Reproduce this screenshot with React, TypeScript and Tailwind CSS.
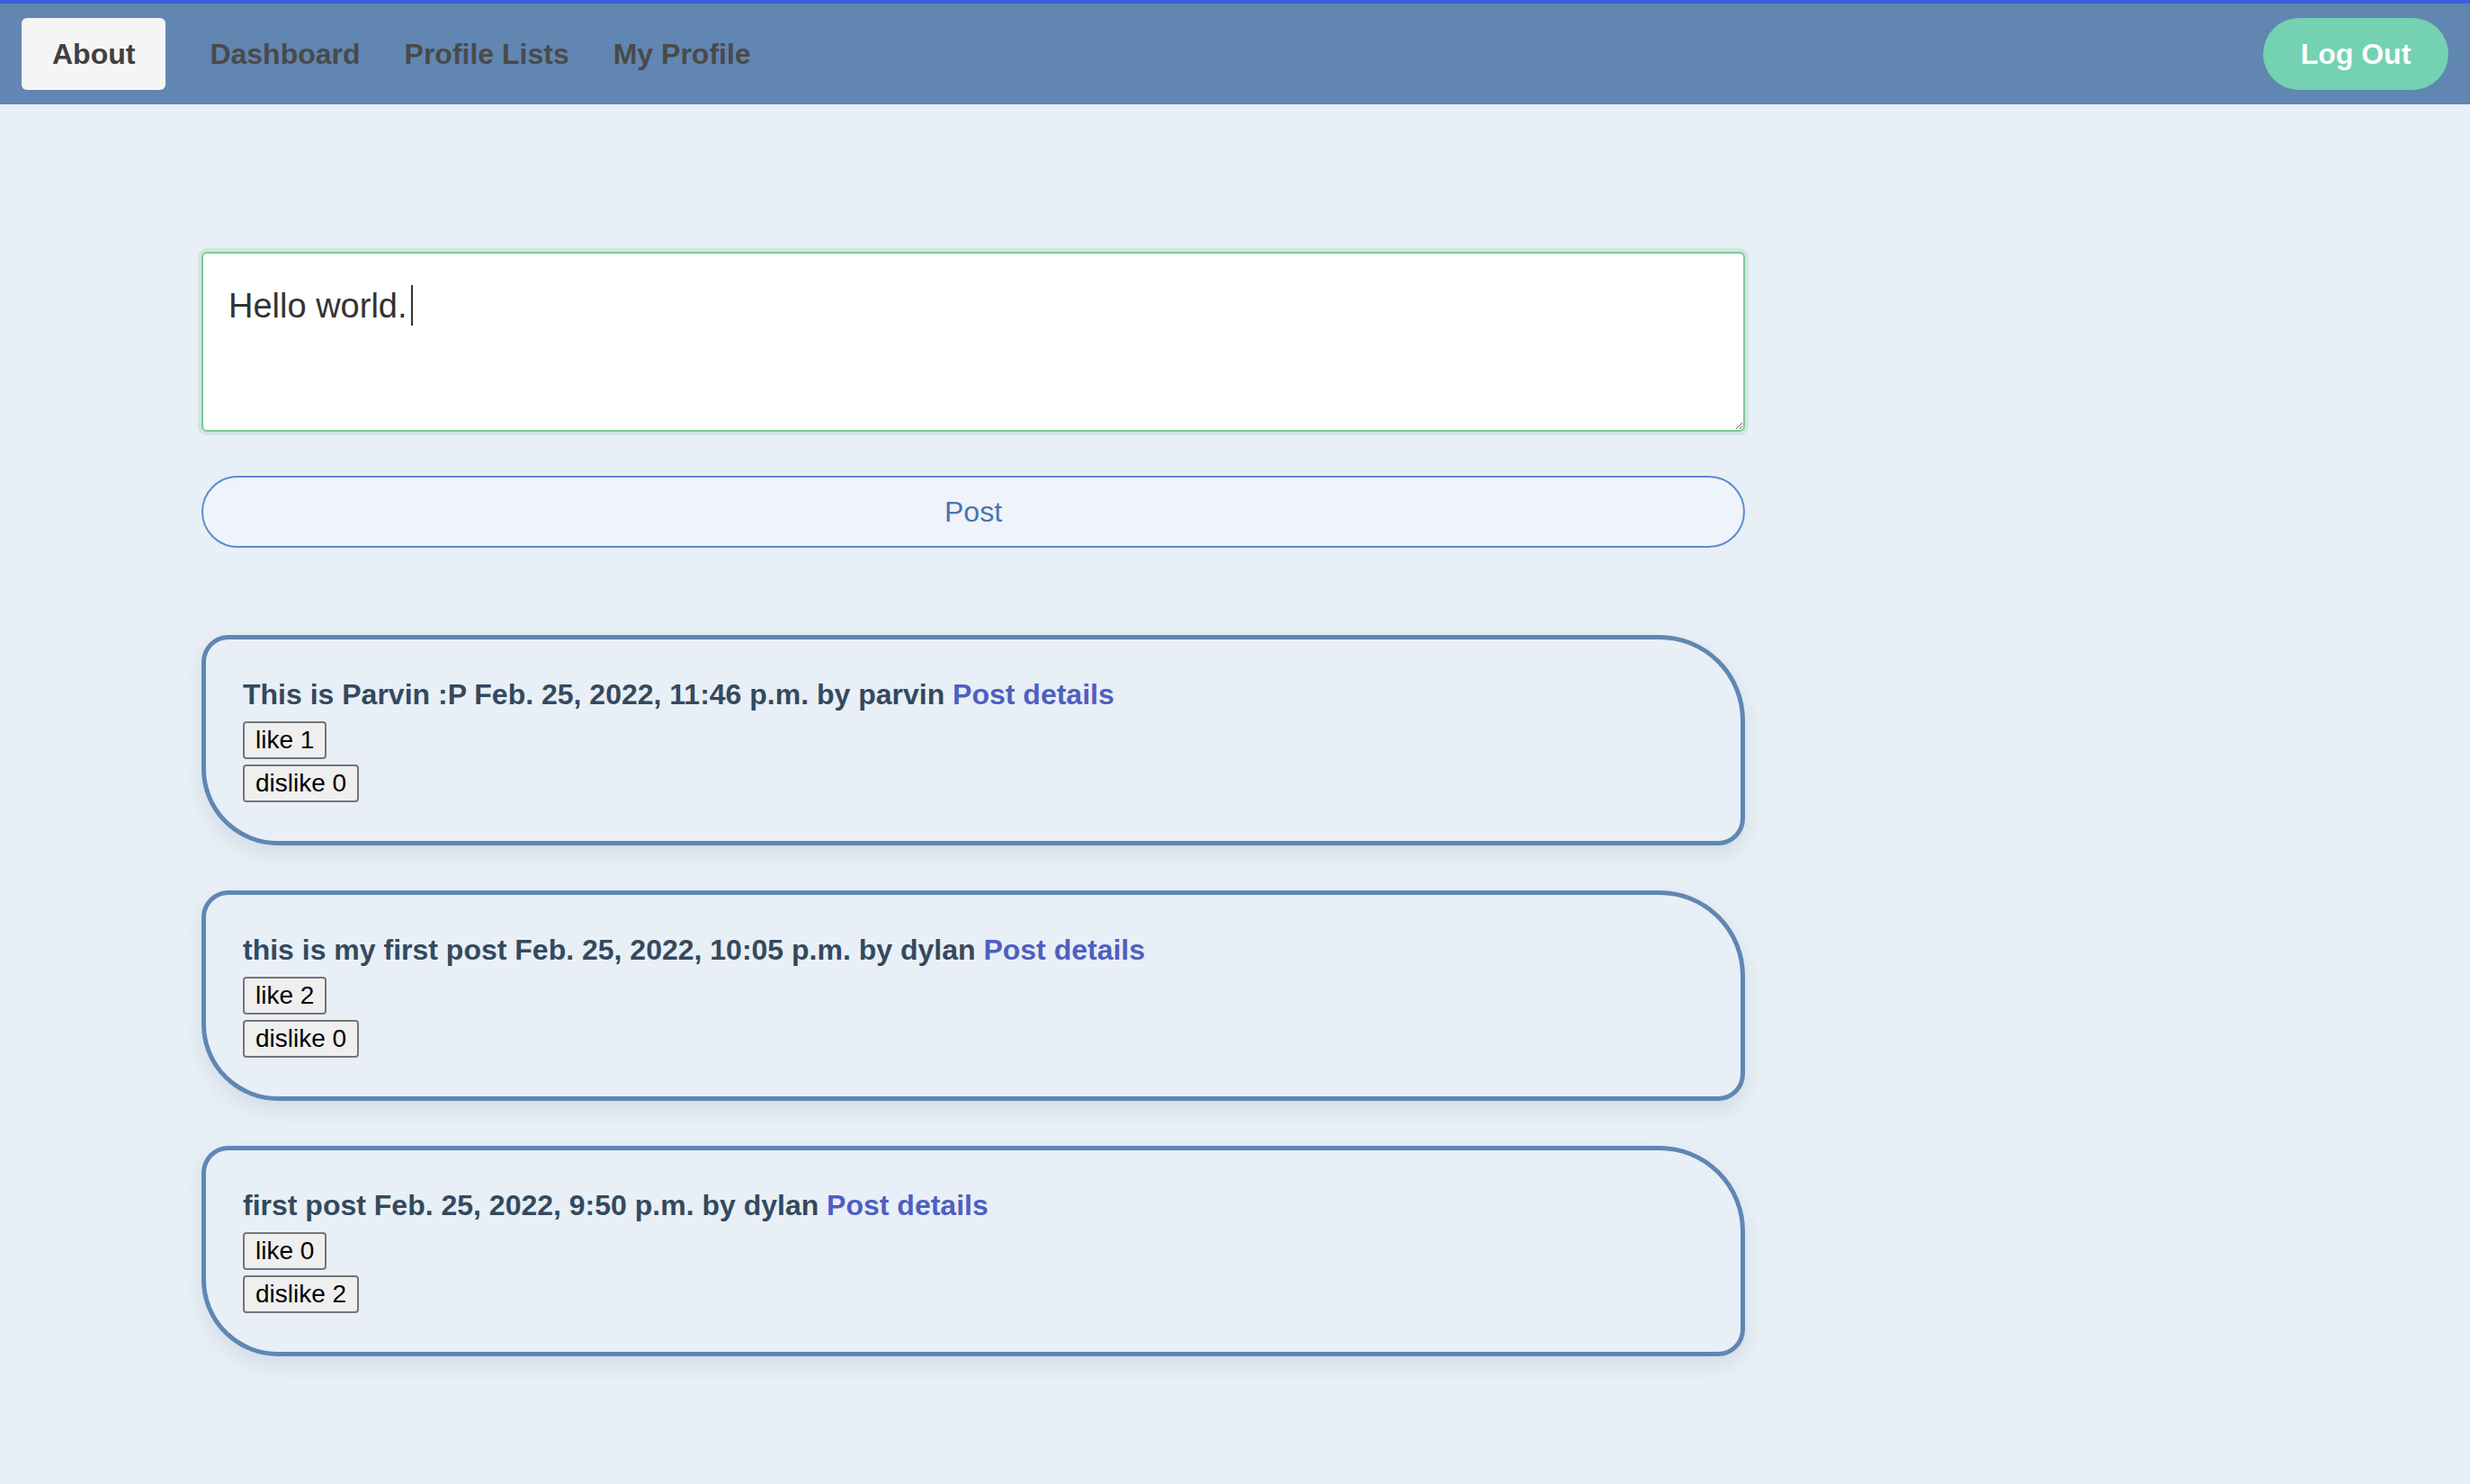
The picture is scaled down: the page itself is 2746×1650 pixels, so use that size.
import React from 'react';

type Post = { body: string; when: string; author: string; likes: number; dislikes: number };

const POSTS: Post[] = [
  { body: 'This is Parvin :P', when: 'Feb. 25, 2022, 11:46 p.m.', author: 'parvin', likes: 1, dislikes: 0 },
  { body: 'this is my first post', when: 'Feb. 25, 2022, 10:05 p.m.', author: 'dylan', likes: 2, dislikes: 0 },
  { body: 'first post', when: 'Feb. 25, 2022, 9:50 p.m.', author: 'dylan', likes: 0, dislikes: 2 },
];

const NavBar: React.FC = () => (
  <nav className="h-[116px] border-t-4 border-[#3b5fd8] bg-[#6186b2] px-[24px] flex items-center justify-between">
    <div className="flex items-center gap-[49px] text-[32px] font-bold text-[#4a4a4a]">
      <a className="h-[80px] px-[34px] rounded-[6px] bg-[#f5f5f5] flex items-center text-[#404040]">About</a>
      <a>Dashboard</a>
      <a>Profile Lists</a>
      <a>My Profile</a>
    </div>
    <button className="h-[80px] w-[206px] rounded-full bg-[#74d1b2] text-[32px] font-bold text-white">
      Log Out
    </button>
  </nav>
);

const PostCard: React.FC<{ post: Post }> = ({ post }) => (
  <div className="h-[234px] border-[5px] border-[#5f87b4] bg-[#e8eff6] rounded-tl-[30px] rounded-tr-[95px] rounded-br-[30px] rounded-bl-[85px] pt-[43px] px-[41px] shadow-[0_10px_22px_rgba(40,60,90,0.10)]">
    <p className="text-[32px] leading-[37px] font-bold text-[#34495e]">
      {post.body} {post.when} by {post.author}{' '}
      <a className="text-[#4f5fc0]">Post details</a>
    </p>
    <div className="mt-[11px] flex flex-col items-start gap-[6px]">
      <button className="h-[42px] px-[12px] border-2 border-[#767676] rounded-[4px] bg-[#efefef] text-[28px] text-black leading-none">
        like {post.likes}
      </button>
      <button className="h-[42px] px-[12px] border-2 border-[#767676] rounded-[4px] bg-[#efefef] text-[28px] text-black leading-none">
        dislike {post.dislikes}
      </button>
    </div>
  </div>
);

export default function App() {
  return (
    <div className="min-h-screen bg-[#e8eff6] font-['Liberation_Sans',Arial,sans-serif]">
      <NavBar />
      <main className="pl-[224px] pt-[164px] pb-[120px] w-[1940px]">
        <div className="relative w-[1716px]">
          <textarea
            defaultValue="Hello world."
            className="block w-[1716px] h-[200px] border-2 border-[#7dc896] rounded-[6px] bg-white pl-[28px] pr-[28px] pt-[37px] text-[38px] leading-[1.15] text-[#333] outline-none shadow-[0_0_0_4px_#cfe6df] caret-transparent"
          />
          {/* cursor de texto */}
          <span className="absolute left-[233px] top-[37px] h-[45px] w-[2px] bg-[#333]" />
        </div>
        <button className="mt-[49px] block w-[1716px] h-[80px] rounded-full border-2 border-[#5b8bd0] bg-[#eef4f9] text-[32px] text-[#4a74b5]">
          Post
        </button>
        <div className="mt-[97px] flex flex-col gap-[50px]">
          {POSTS.map((p, i) => (
            <PostCard key={i} post={p} />
          ))}
        </div>
      </main>
    </div>
  );
}
